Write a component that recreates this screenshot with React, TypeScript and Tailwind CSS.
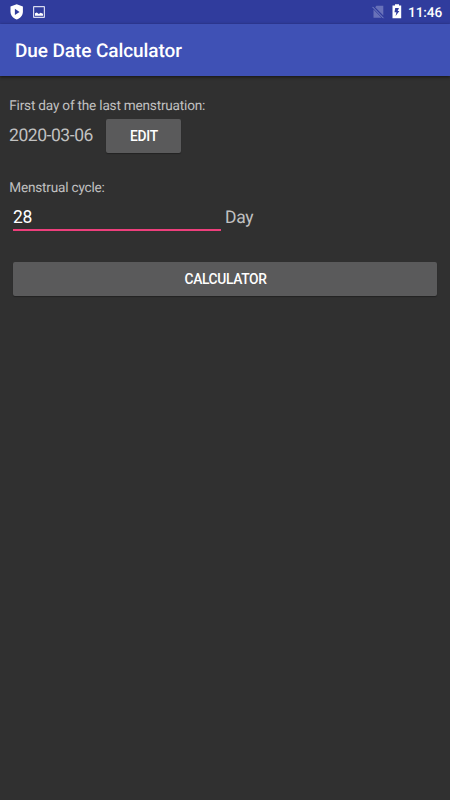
import React from "react";

function StatusBar() {
  return (
    <div className="flex h-6 items-start justify-between bg-[#303c9d] pl-[10px] pr-2 text-white">
      <div className="flex">
        <svg className="mt-[4px] h-4 w-[13px]" viewBox="0 0 13 16">
          <path d="M6.7 .3 12.9 2.6V7.5C12.9 11.3 10.3 14.3 6.7 15.6 3.1 14.3 .5 11.3 .5 7.5V2.6Z" fill="#fff" />
          <path d="M4.9 4.8v6.2L9.6 7.9Z" fill="#303c9d" />
        </svg>
        <svg className="ml-[10px] mt-[6px] h-3 w-3" viewBox="0 0 12 12">
          <rect x=".6" y=".6" width="10.8" height="10.8" rx=".4" fill="none" stroke="#d5d8ee" strokeWidth="1.2" />
          <path d="M2 9.8V7.2L3.8 6.4 5.8 8 7.6 6.7 10 7.8V9.8Z" fill="#fff" />
        </svg>
      </div>
      <div className="flex">
        <svg className="mr-[-1px] mt-[5px] h-[14px] w-[13px]" viewBox="0 0 13 14">
          <path d="M4.4 .8H11.3V10.6L3.2 2.2ZM1.5 4.4 9.6 12.8H1.5Z" fill="#6871b9" />
          <path d="M.5 1.9 11.5 13.2" stroke="#8891cb" strokeWidth=".9" />
        </svg>
        <svg className="ml-2 mt-[4px] h-[15px] w-[10px]" viewBox="0 0 10 15">
          <path d="M3 .2H7V1.5H9.2V14.3H.5V1.5H3Z" fill="#fff" />
          <path d="M7 3.9H3.2L2.5 8.2H4.4L3.6 12 7.4 7H5.6Z" fill="#303c9d" />
        </svg>
        <span className="ml-[6px] mt-[3px] w-[34px] whitespace-nowrap pt-[0.5px] text-[13.7px] font-medium leading-[18px] tracking-[-0.1px]">11:46</span>
      </div>
    </div>
  );
}

export default function App() {
  return (
    <div className="flex h-[800px] w-[450px] flex-col overflow-hidden bg-[#303030] font-['Roboto',sans-serif] text-[#c1c1c1] [text-rendering:geometricPrecision]">
      <StatusBar />
      <header className="flex h-[52px] shrink-0 items-center bg-[#3f51b5] pl-[15px] pt-[1px] shadow-[0_1px_3px_rgba(0,0,0,0.6)]">
        <h1 className="text-[19px] font-medium leading-6 tracking-[-0.08px] text-white">Due Date Calculator</h1>
      </header>
      <main className="flex flex-col pl-[9px] pr-[9.5px] pt-[21px]">
        <div className="h-4 pl-[0.3px] text-[13.6px] leading-[18px] tracking-[-0.2px]">First day of the last menstruation:</div>
        <div className="mt-[6px] flex h-[34px]">
          <span className="w-[97px] text-[17.5px] leading-[34px] tracking-[-0.44px]">2020-03-06</span>
          <button className="h-[33.7px] w-[75px] rounded-[2px] bg-[#5a5a5b] pl-[1px] text-[13.8px] font-medium tracking-[-0.25px] text-white shadow-[0_1px_1px_rgba(0,0,0,0.3)]">EDIT</button>
        </div>
        <div className="mt-[26px] h-4 pl-[0.3px] text-[13.6px] leading-[18px] tracking-[-0.2px]">Menstrual cycle:</div>
        <div className="mt-[10px] flex h-[27px] pl-[4px]">
          <input className="h-[26.4px] w-[208px] border-b-2 border-[#ee3f7c] bg-transparent text-[17.5px] leading-6 tracking-[-0.3px] text-white outline-none" defaultValue="28" aria-label="Menstrual cycle" />
          <span className="ml-[4px] text-[17.5px] leading-[26px] tracking-[-0.3px]">Day</span>
        </div>
        <button className="ml-[4px] mr-[3.5px] mt-[30px] h-[33.7px] rounded-[2px] bg-[#5a5a5b] pl-[1px] text-[13.8px] font-medium tracking-[-0.35px] text-white shadow-[0_1px_1px_rgba(0,0,0,0.3)]">CALCULATOR</button>
      </main>
    </div>
  );
}
